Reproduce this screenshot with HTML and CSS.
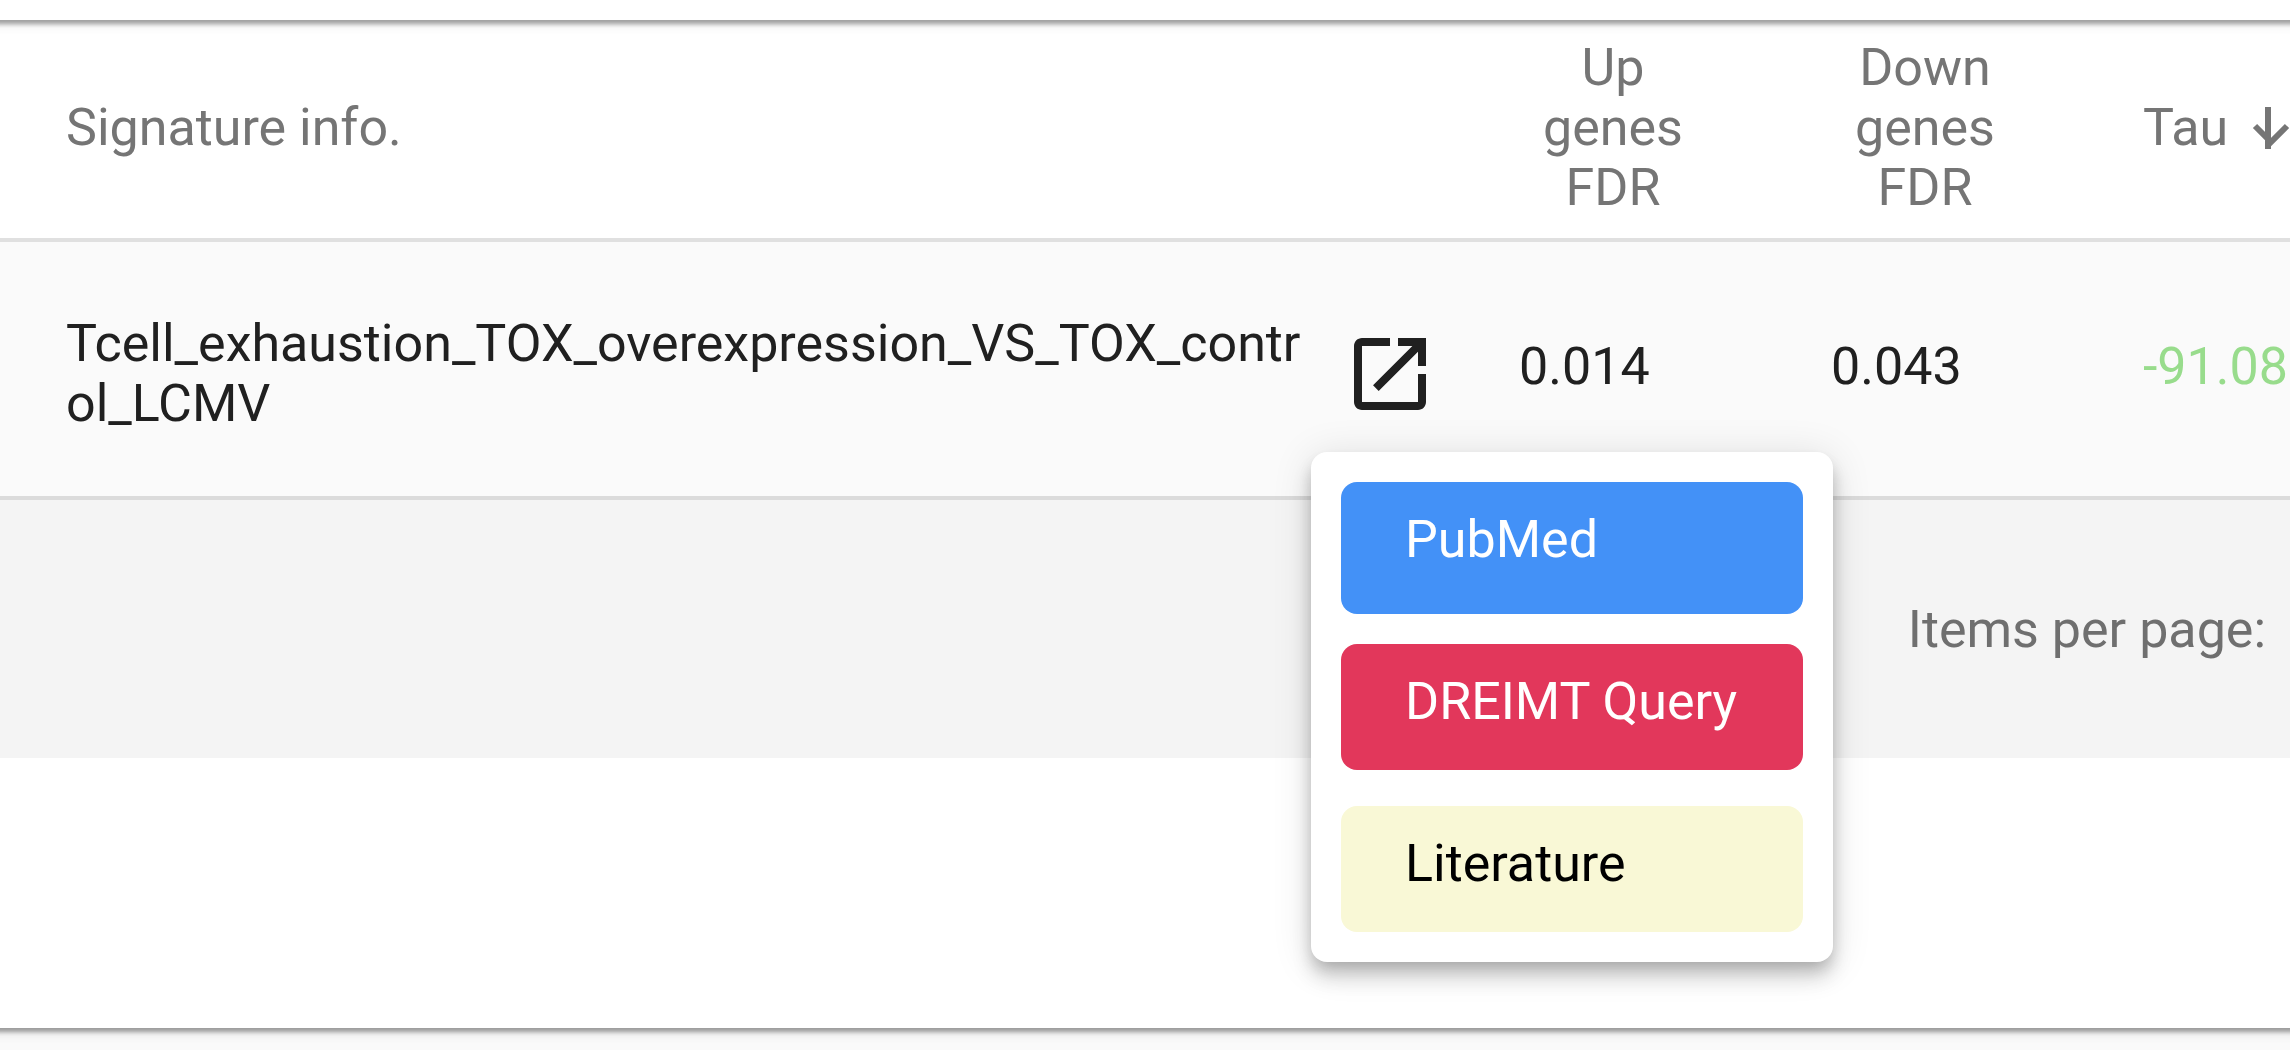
FILE: index.html
```html
<!DOCTYPE html>
<html lang="en">
<head>
<meta charset="utf-8">
<title>Signatures</title>
<link rel="stylesheet" href="styles.css">
</head>
<body>
<header class="top-panel"></header>
<main class="card">
  <table class="results">
    <colgroup>
      <col>
      <col class="col-number">
      <col class="col-number">
      <col class="col-tau">
    </colgroup>
    <thead>
      <tr>
        <th class="info" scope="col">Signature info.</th>
        <th scope="col"><span class="stacked">Up genes FDR</span></th>
        <th scope="col"><span class="stacked">Down genes FDR</span></th>
        <th scope="col">
          <button class="sort" type="button">Tau
            <svg class="sort-arrow" viewBox="0 0 38 44" aria-hidden="true"><path d="M16 1v42M3 20l16 16 16-16" fill="none" stroke="currentColor" stroke-width="6"/></svg>
          </button>
        </th>
      </tr>
    </thead>
    <tbody>
      <tr>
        <td class="info">
          <div class="signature">
            <span class="name">Tcell_exhaustion_TOX_overexpression_VS_TOX_contr<wbr>ol_LCMV</span>
            <div class="links">
              <button class="open" type="button" aria-label="Open links">
                <svg viewBox="0 0 24 24" aria-hidden="true"><path fill="currentColor" d="M19 19H5V5h7V3H5c-1.110 0-2 .9-2 2v14c0 1.100.890 2 2 2h14c1.100 0 2-.9 2-2v-7h-2v7zM14 3v2h3.590l-9.830 9.830 1.410 1.410L19 6.410V10h2V3h-7z"/></svg>
              </button>
              <nav class="menu">
                <a class="item pubmed" href="#">PubMed</a>
                <a class="item query" href="#">DREIMT Query</a>
                <a class="item literature" href="#">Literature</a>
              </nav>
            </div>
          </div>
        </td>
        <td class="number">0.014</td>
        <td class="number">0.043</td>
        <td class="number tau">-91.08</td>
      </tr>
    </tbody>
  </table>
  <footer class="paginator">Items per page:</footer>
</main>
</body>
</html>
```

FILE: styles.css
```css
* {
  box-sizing: border-box;
}

html {
  background: #fafafa;
}

body {
  min-height: 100vh;
  margin: 0;
  color: #202020;
  font: 52px/60px Roboto, "Liberation Sans", sans-serif;
  overflow-x: clip;
}

/* Both panels run past the window's sides so that their shadows stay even. */
.top-panel,
.card {
  position: relative;
  margin: 0 -24px;
  padding: 0 24px;
  background: #fff;
  box-shadow: 0 8px 4px -4px rgba(0, 0, 0, .2), 0 4px 4px rgba(0, 0, 0, .14), 0 4px 12px rgba(0, 0, 0, .12);
}

.top-panel {
  z-index: 1;
  height: 20px;
}

.card {
  padding-bottom: 270px;
}

.results {
  width: 100%;
  table-layout: fixed;
  border-collapse: separate;
  border-spacing: 0;
}

.col-number {
  width: 312px;
}

.col-tau {
  width: 147px;
}

th,
td {
  padding: 0;
  text-align: left;
  vertical-align: middle;
  border-bottom: 4px solid #e0e0e0;
}

th {
  padding: 18px 0 20px;
  color: #757575;
  font-weight: 400;
}

.stacked {
  display: block;
  width: 188px;
  padding: 0 20px;
  text-align: center;
}

th.info {
  padding-left: 66px;
}

td {
  background: #fafafa;
  border-color: #dbdbdb;
}

td.info {
  padding: 72px 0 62px 66px;
}

td.number {
  padding-bottom: 4px;
}

td.tau {
  color: #98dc8c;
}

button {
  padding: 0;
  border: 0;
  background: none;
  color: inherit;
  font: inherit;
  cursor: pointer;
}

.sort {
  display: flex;
  align-items: center;
  gap: 24px;
}

.sort-arrow {
  flex: none;
  width: 38px;
  height: 44px;
}

.signature {
  display: flex;
  align-items: center;
  justify-content: space-between;
  padding-right: 81px;
}

.links {
  position: relative;
  flex: none;
}

.open {
  display: block;
  width: 96px;
  height: 96px;
}

.open svg {
  display: block;
}

.menu {
  position: absolute;
  z-index: 2;
  top: 126px;
  left: -31px;
  display: flex;
  flex-direction: column;
  gap: 36px;
  width: 522px;
  padding: 30px;
  border-radius: 16px;
  background: #fff;
  box-shadow: 0 8px 16px -4px rgba(0, 0, 0, .2), 0 16px 20px rgba(0, 0, 0, .14), 0 4px 40px rgba(0, 0, 0, .12);
}

.item {
  padding: 28px 0 38px 64px;
  border-radius: 16px;
  color: #fff;
  text-decoration: none;
  white-space: nowrap;
}

.pubmed {
  margin-bottom: -6px;
  padding-bottom: 44px;
  background: #4391f7;
}

.query {
  background: #e2375b;
}

.literature {
  background: #f9f8d6;
  color: #000;
}

.paginator {
  padding: 100px 24px 98px;
  background: #f4f4f4;
  color: #6f6f6f;
  text-align: right;
}
```
